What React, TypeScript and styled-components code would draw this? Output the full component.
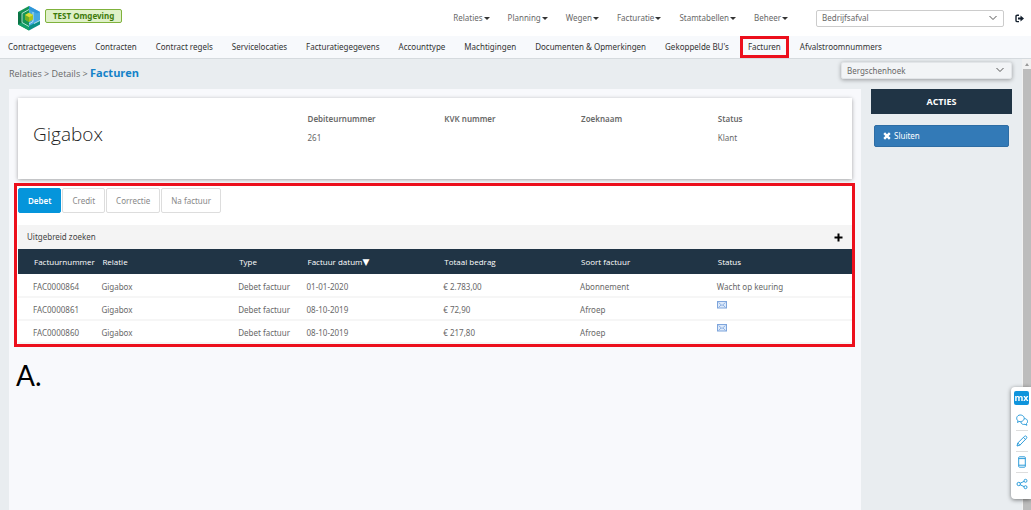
import React from 'react';
import styled, { createGlobalStyle, css } from 'styled-components';

const GlobalStyle = createGlobalStyle`
  * { box-sizing: border-box; }
  body {
    margin: 0;
    background: #e9edf0;
    color: #686868;
    font: 8px/12px 'Noto Sans', sans-serif;
  }
  button, select { font: inherit; color: inherit; margin: 0; }
  a { color: inherit; text-decoration: none; }
  h1, h2, dl, dd, ul, p { margin: 0; padding: 0; font-weight: 400; }
`;

const Page = styled.div`
  display: flex;
  flex-direction: column;
  min-height: 100vh;
`;

const Header = styled.header`
  display: flex;
  align-items: center;
  height: 36px;
  padding: 0 7px 0 17px;
  background: #fff;
`;

const EnvBadge = styled.span`
  margin: 0 auto 5px 4px;
  padding: 0 7px;
  border: 1px solid #7fb23c;
  border-radius: 2px;
  background: #dff0c8;
  color: #3c7a0a;
  font-weight: 700;
`;

const MainMenu = styled.nav`
  display: flex;
  gap: 18px;
  margin-right: 28px;
`;

const MenuButton = styled.button`
  display: flex;
  align-items: center;
  padding: 0;
  border: 0;
  background: none;
  &::after {
    content: '';
    margin-left: 1px;
    border: 3px solid transparent;
    border-top: 3px solid #333;
    border-bottom: 0;
  }
`;

const SelectBox = styled.label<{ $raised?: boolean }>`
  position: relative;
  display: block;
  width: ${p => (p.$raised ? 171 : 188)}px;
  select {
    display: block;
    width: 100%;
    height: 17px;
    padding: 0 5px;
    appearance: none;
    border: 1px solid #ccc;
    border-radius: 2px;
    background: #fff;
  }
  svg {
    position: absolute;
    top: 5px;
    right: ${p => (p.$raised ? 8 : 7)}px;
    pointer-events: none;
  }
  ${p => p.$raised && css`
    select {
      background: #f2f4f6;
      border-color: #e2e5e8;
      box-shadow: 0 1px 4px rgba(0, 0, 0, 0.35);
    }
  `}
`;

const LogoutButton = styled.button`
  display: flex;
  margin-left: 11px;
  padding: 0;
  border: 0;
  background: none;
`;

const SubNav = styled.nav`
  display: flex;
  align-items: center;
  gap: 19px;
  height: 23px;
  padding: 0 8px;
  background: #f7f9fc;
  border-bottom: 1px solid #d5dade;
  color: #333;
`;

const SubLink = styled.a<{ $marked?: boolean }>`
  white-space: nowrap;
  ${p => p.$marked && css`
    margin: 0 -8px;
    padding: 2px 5px;
    border: 3px solid #ec0f1c;
  `}
`;

const Body = styled.main`
  display: flex;
  flex: 1;
`;

const Workspace = styled.div`
  display: flex;
  flex: 1;
  flex-direction: column;
  padding: 0 10px 0 9px;
`;

const CrumbBar = styled.div`
  display: flex;
  justify-content: space-between;
  height: 30px;
  padding-top: 3px;
`;

const Crumbs = styled.nav`
  padding-top: 3px;
  font: 9px/16px 'Open Sans', sans-serif;
  strong {
    color: #1482c8;
    font-size: 11px;
  }
`;

const Columns = styled.div`
  display: flex;
  flex: 1;
  gap: 10px;
`;

const Content = styled.div`
  flex: 1;
  padding: 9px;
  background: #f8f9fc;
`;

const Card = styled.section`
  display: grid;
  grid-template-columns: 32.8% 16.4% 16.4% 16.4% 18%;
  height: 81px;
  background: #fff;
  box-shadow: 0 1px 4px rgba(0, 0, 0, 0.35);
`;

const CardTitle = styled.h1`
  padding: 23px 15px;
  color: #222;
  font: 300 19px/26px 'Open Sans', sans-serif;
`;

const Field = styled.dl`
  padding: 15px 0 0 16px;
  dt { font-weight: 600; }
  dd { margin-top: 7px; }
`;

const Invoices = styled.section`
  margin: 4px -3px 0 -4px;
  padding: 2px 0 0 1px;
  border: 3px solid #ec0f1c;
  background: #fff;
`;

const Tabs = styled.div`
  display: flex;
  gap: 1px;
  height: 37px;
`;

const Tab = styled.button<{ $active?: boolean }>`
  height: 25px;
  padding: 0 9px;
  border: 1px solid ${p => (p.$active ? '#0595db' : '#ddd')};
  border-radius: 2px;
  background: ${p => (p.$active ? '#0595db' : '#fff')};
  color: ${p => (p.$active ? '#fff' : '#888')};
  font-weight: ${p => (p.$active ? 600 : 400)};
`;

const SearchBar = styled.button`
  display: flex;
  align-items: center;
  justify-content: space-between;
  width: 100%;
  height: 24px;
  padding: 0 9px;
  border: 0;
  background: #f4f4f4;
  color: #444;
`;

const Table = styled.table`
  width: 100%;
  table-layout: fixed;
  border-collapse: collapse;
  border-bottom: 1px solid #ccc;
  th, td { text-align: left; white-space: nowrap; }
  th {
    height: 25px;
    padding: 0 0 0 16px;
    background: #203445;
    color: #fff;
    font: 500 8px/12px 'Open Sans', sans-serif;
  }
  td {
    height: 23px;
    padding: 3px 0 0 15px;
    border-bottom: 2px solid #f6f6f6;
  }
  td svg { display: block; margin-bottom: 10px; }
`;

const SortMark = styled.span`
  font: 9px/12px 'DejaVu Sans', sans-serif;
`;

const Marker = styled.p`
  margin: 12px 0 0 -2px;
  color: #000;
  font: 28px/32px Lato, sans-serif;
`;

const Actions = styled.aside`
  width: 141px;
  h2 {
    background: #203445;
    color: #fff;
    font: 700 9px/25px 'Open Sans', sans-serif;
    text-align: center;
  }
`;

const ActionButton = styled.button`
  display: flex;
  align-items: center;
  gap: 3px;
  width: calc(100% - 6px);
  height: 22px;
  margin: 11px 3px;
  padding: 0 8px;
  border: 1px solid #2e6da4;
  border-radius: 2px;
  background: #337ab7;
  color: #fff;
`;

const ScrollRail = styled.div`
  display: flex;
  flex-direction: column;
  align-items: center;
  width: 9px;
  padding-top: 4px;
  background: #f1f1f1;
  &::before {
    content: '';
    border: 2px solid transparent;
    border-top: 0;
    border-bottom: 3px solid #999;
  }
  &::after {
    content: '';
    flex: 1;
    width: 8px;
    margin-top: 3px;
    background: #bcbcbc;
  }
`;

const Feedback = styled.div`
  position: fixed;
  right: 0;
  bottom: 11px;
  display: flex;
  flex-direction: column;
  align-items: center;
  width: 20px;
  padding: 4px 0 5px 1px;
  border-radius: 4px 0 0 4px;
  background: #fff;
  box-shadow: 0 1px 4px rgba(0, 0, 0, 0.5);
`;

const MxBadge = styled.span`
  width: 15px;
  margin-bottom: 5px;
  border-radius: 2px;
  background: #0f94dc;
  color: #fff;
  font: 700 9px/14px 'Open Sans', sans-serif;
  text-align: center;
`;

const FeedbackButton = styled.button`
  display: flex;
  align-items: center;
  justify-content: center;
  width: 12px;
  height: 21px;
  padding: 0;
  border: 0;
  border-bottom: 1px solid #ddd;
  background: none;
  &:last-child { border-bottom: 0; }
`;

const Logo = () => (
  <svg width="24" height="26" viewBox="0 0 24 26" aria-hidden="true">
    <path d="M1 7 12 1v24.500L1 19.500z" fill="#159455" />
    <path d="M1 7l4 2v8.500L1 19.500z" fill="#0a7345" />
    <path d="M12 1l11 6v10l-11 6z" fill="#45a9e2" />
    <path d="M12 1l11 6-3 1.500L12 4.500z" fill="#2f96d8" />
    <path d="M12 25.500V21l11-5.500v4z" fill="#0a8f86" />
    <path d="M5 17.500l7 4v4l-11-6z" fill="#12a06a" />
    <path d="M12 4.500 5 8.500v9l7 4M16 7v9.500l-4 2.500M23 15.500l-6 3" fill="none" stroke="#d8f0ee" strokeWidth=".8" />
    <path d="M8 10l4-2.200L16 10v4.500L12 17l-4-2.500z" fill="#a9c41d" />
    <path d="M8 10l4-2.200L16 10l-4 2.200z" fill="#d8de3c" />
    <path d="M8 10l4 2.200V17l-4-2.500z" fill="#6fae28" />
  </svg>
);

const Chevron = () => (
  <svg width="8" height="6" viewBox="0 0 8 6" fill="none" stroke="#555" aria-hidden="true">
    <path d="M.5 1 4 4.500 7.500 1" />
  </svg>
);

const LogoutIcon = () => (
  <svg width="9" height="9" viewBox="0 0 9 9" fill="none" stroke="#14202e" aria-hidden="true">
    <path d="M4 1.200H2.200Q1 1.200 1 2.400v4Q1 7.600 2.200 7.600H4" strokeWidth="1.400" />
    <path d="M3 3.500h2.500V1.600L9 4.500 5.500 7.400V5.500H3z" fill="#14202e" stroke="none" />
  </svg>
);

const PlusIcon = () => (
  <svg width="9" height="9" viewBox="0 0 9 9" aria-hidden="true">
    <path d="M.5 4.500h8M4.500 .5v8" stroke="#000" strokeWidth="2" />
  </svg>
);

const CloseIcon = () => (
  <svg width="8" height="8" viewBox="0 0 8 8" aria-hidden="true">
    <path d="M1.200 1.200l5.600 5.600M6.800 1.200 1.200 6.800" stroke="#fff" strokeWidth="2.400" />
  </svg>
);

const MailIcon = () => (
  <svg width="10" height="8" viewBox="0 0 10 8" fill="none" role="img" aria-label="Verzonden per e-mail">
    <rect x=".5" y=".5" width="9" height="6.500" fill="#dce9fa" stroke="#7ea5dc" />
    <path d="M1.500 1.500 5 4.500l3.500-3M1.500 6.500 4 4M8.500 6.500 6 4" stroke="#7ea5dc" strokeWidth=".8" />
  </svg>
);

const feedbackIcons = [
  { label: 'Chat', d: 'M3 7.500 1.500 8.500 2 6.800C-.5 5 .8 1 4.200 1s5 3 3.500 5C6.800 7.300 5 7.800 3 7.500ZM8.500 4.500c3 .2 4 3.500 2 5l.3 1.800-1.800-1C7 10.800 5 10 4.800 7.800' },
  { label: 'Bewerken', d: 'M1 11 1.800 8 8.500 1.300q1-.8 1.900.1t.1 1.900L3.900 10.200ZM7.500 2.400 9.500 4.400M1.800 8l2.100 2.200' },
  { label: 'Mobiel', d: 'M3.500 .8h5q.8 0 .8.800v8.800q0 .8-.8.800h-5q-.8 0-.8-.8V1.600q0-.8.800-.8ZM2.700 2.600h6.600M2.700 9.200h6.600' },
  { label: 'Delen', d: 'M4.400 6a1.700 1.700 0 1 0-3.400 0a1.700 1.700 0 1 0 3.400 0M11 2.800a1.500 1.500 0 1 0-3 0a1.500 1.500 0 1 0 3 0M11 9.200a1.500 1.500 0 1 0-3 0a1.500 1.500 0 1 0 3 0M4.200 5.200 8.100 3.400M4.200 6.800 8.100 8.600' },
];

const menuItems = ['Relaties', 'Planning', 'Wegen', 'Facturatie', 'Stamtabellen', 'Beheer'];
const subItems = [
  'Contractgegevens', 'Contracten', 'Contract regels', 'Servicelocaties', 'Facturatiegegevens', 'Accounttype',
  'Machtigingen', 'Documenten & Opmerkingen', "Gekoppelde BU's", 'Facturen', 'Afvalstroomnummers',
];
const fields = [['Debiteurnummer', '261'], ['KVK nummer', ''], ['Zoeknaam', ''], ['Status', 'Klant']];
const tabs = ['Debet', 'Credit', 'Correctie', 'Na factuur'];
const columns = [
  { title: 'Factuurnummer', width: '8.2%' },
  { title: 'Relatie', width: '16.4%' },
  { title: 'Type', width: '8.2%' },
  { title: 'Factuur datum', width: '16.4%', sorted: true },
  { title: 'Totaal bedrag', width: '16.4%' },
  { title: 'Soort factuur', width: '16.4%' },
  { title: 'Status', width: '18%' },
];
const rows = [
  ['FAC0000864', 'Gigabox', 'Debet factuur', '01-01-2020', '€ 2.783,00', 'Abonnement', 'Wacht op keuring'],
  ['FAC0000861', 'Gigabox', 'Debet factuur', '08-10-2019', '€ 72,90', 'Afroep', ''],
  ['FAC0000860', 'Gigabox', 'Debet factuur', '08-10-2019', '€ 217,80', 'Afroep', ''],
];

export default function App() {
  return (
    <Page>
      <GlobalStyle />
      <Header>
        <Logo />
        <EnvBadge>TEST Omgeving</EnvBadge>
        <MainMenu>
          {menuItems.map(item => <MenuButton key={item}>{item}</MenuButton>)}
        </MainMenu>
        <SelectBox>
          <select aria-label="Afdeling"><option>Bedrijfsafval</option></select>
          <Chevron />
        </SelectBox>
        <LogoutButton aria-label="Uitloggen"><LogoutIcon /></LogoutButton>
      </Header>
      <SubNav>
        {subItems.map(item => (
          <SubLink key={item} href="#" $marked={item === 'Facturen'}>{item}</SubLink>
        ))}
      </SubNav>
      <Body>
        <Workspace>
          <CrumbBar>
            <Crumbs>
              <a href="#">Relaties</a> &gt; <a href="#">Details</a> &gt; <strong>Facturen</strong>
            </Crumbs>
            <SelectBox $raised>
              <select aria-label="Vestiging"><option>Bergschenhoek</option></select>
              <Chevron />
            </SelectBox>
          </CrumbBar>
          <Columns>
            <Content>
              <Card>
                <CardTitle>Gigabox</CardTitle>
                {fields.map(([label, value]) => (
                  <Field key={label}><dt>{label}</dt><dd>{value}</dd></Field>
                ))}
              </Card>
              <Invoices>
                <Tabs>
                  {tabs.map((tab, i) => <Tab key={tab} $active={i === 0}>{tab}</Tab>)}
                </Tabs>
                <SearchBar>Uitgebreid zoeken<PlusIcon /></SearchBar>
                <Table>
                  <colgroup>
                    {columns.map(c => <col key={c.title} width={c.width} />)}
                  </colgroup>
                  <thead>
                    <tr>
                      {columns.map(c => (
                        <th key={c.title}>{c.title}{c.sorted && <SortMark>▼</SortMark>}</th>
                      ))}
                    </tr>
                  </thead>
                  <tbody>
                    {rows.map(row => (
                      <tr key={row[0]}>
                        {row.map((cell, i) => <td key={i}>{cell || <MailIcon />}</td>)}
                      </tr>
                    ))}
                  </tbody>
                </Table>
              </Invoices>
              <Marker>A.</Marker>
            </Content>
            <Actions>
              <h2>ACTIES</h2>
              <ActionButton><CloseIcon />Sluiten</ActionButton>
            </Actions>
          </Columns>
        </Workspace>
        <ScrollRail />
      </Body>
      <Feedback>
        <MxBadge>mx</MxBadge>
        {feedbackIcons.map(icon => (
          <FeedbackButton key={icon.label} aria-label={icon.label}>
            <svg width="12" height="12" viewBox="0 0 12 12" fill="none" stroke="#1a93d6" strokeWidth=".9" aria-hidden="true">
              <path d={icon.d} />
            </svg>
          </FeedbackButton>
        ))}
      </Feedback>
    </Page>
  );
}
